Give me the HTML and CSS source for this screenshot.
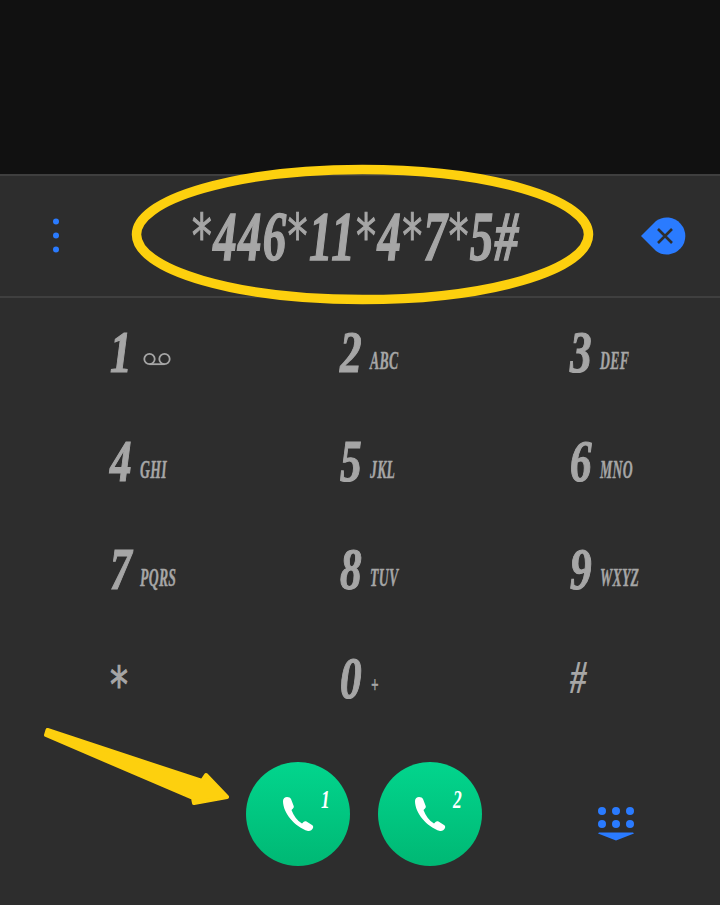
FILE: index.html
```html
<!DOCTYPE html>
<html lang="en">
<head>
    <meta charset="UTF-8">
    <title>Dialer</title>
    <link rel="stylesheet" href="styles.css">
</head>
<body>
    <div class="status-area"></div>

    <div class="number-bar">
        <svg class="menu-icon" width="8" height="36" viewBox="0 0 8 36">
            <circle cx="4" cy="3.500" r="3"/>
            <circle cx="4" cy="17.500" r="3"/>
            <circle cx="4" cy="31.500" r="3"/>
        </svg>
        <div class="number"><span class="squeeze"><span class="ast">*</span>446<span class="ast">*</span>11<span class="ast">*</span>4<span class="ast">*</span>7<span class="ast">*</span>5#</span></div>
        <svg class="backspace" width="46" height="38" viewBox="0 0 46 38">
            <path d="M1 19 L16 4 A18.500 18.500 0 1 1 16 34 Z" fill="#2a7bff"/>
            <path d="M18 12 L32 26 M32 12 L18 26" stroke="#2d2d2d" stroke-width="2.600" fill="none"/>
        </svg>
    </div>

    <div class="keypad">
        <div class="key"><span class="digit">1</span>
            <svg class="voicemail" width="28" height="14" viewBox="0 0 28 14">
                <circle cx="6.500" cy="7" r="5.200"/>
                <circle cx="21.500" cy="7" r="5.200"/>
                <path d="M6.500 12.200 H21.500"/>
            </svg>
        </div>
        <div class="key"><span class="digit">2</span><span class="letters">ABC</span></div>
        <div class="key"><span class="digit">3</span><span class="letters">DEF</span></div>
        <div class="key"><span class="digit">4</span><span class="letters">GHI</span></div>
        <div class="key"><span class="digit">5</span><span class="letters">JKL</span></div>
        <div class="key"><span class="digit">6</span><span class="letters">MNO</span></div>
        <div class="key"><span class="digit">7</span><span class="letters">PQRS</span></div>
        <div class="key"><span class="digit">8</span><span class="letters">TUV</span></div>
        <div class="key"><span class="digit">9</span><span class="letters">WXYZ</span></div>
        <div class="key"><span class="digit star">*</span></div>
        <div class="key"><span class="digit">0</span><span class="letters plus">+</span></div>
        <div class="key"><span class="digit hash">#</span></div>
    </div>

    <div class="call-row">
        <div class="call-btn">
            <svg width="34" height="38" viewBox="0 0 34 38"><path class="handset" d="M6 2 C4 2 2 3.500 2 6 C2 18 14 32 27 36 C29 36.500 31 35 32 33 C32.500 31.500 32 30.500 31 30 L25.500 26.500 C24.500 26 23.500 26 22.500 27 L21 28.500 C16 25.500 12.500 20.500 10.500 15 L12 13.500 C13 12.500 13 11.500 12.500 10.500 L10 4 C9.500 2.700 8 2 6 2 Z"/></svg>
            <span class="sim">1</span>
        </div>
        <div class="call-btn">
            <svg width="34" height="38" viewBox="0 0 34 38"><path class="handset" d="M6 2 C4 2 2 3.500 2 6 C2 18 14 32 27 36 C29 36.500 31 35 32 33 C32.500 31.500 32 30.500 31 30 L25.500 26.500 C24.500 26 23.500 26 22.500 27 L21 28.500 C16 25.500 12.500 20.500 10.500 15 L12 13.500 C13 12.500 13 11.500 12.500 10.500 L10 4 C9.500 2.700 8 2 6 2 Z"/></svg>
            <span class="sim">2</span>
        </div>
        <svg class="hide-keypad" width="38" height="36" viewBox="0 0 38 36">
            <circle cx="5" cy="5" r="4"/><circle cx="19" cy="5" r="4"/><circle cx="33" cy="5" r="4"/>
            <circle cx="5" cy="18" r="4"/><circle cx="19" cy="18" r="4"/><circle cx="33" cy="18" r="4"/>
            <path d="M2 26.500 H36 L37 27.500 L19 34.500 L1 27.500 Z"/>
        </svg>
    </div>

    <!-- yellow annotations drawn on top of the screenshot -->
    <svg class="annotations" width="720" height="905" viewBox="0 0 720 905">
        <ellipse cx="362.500" cy="234.500" rx="226" ry="65" fill="none" stroke="#fdd00e" stroke-width="9.500"/>
        <path d="M47.500 730 L202 781 L206 775 L227 797 L194 803 L193 798 L46 735 Z" fill="#fdd00e" stroke="#fdd00e" stroke-width="4" stroke-linejoin="round"/>
    </svg>
</body>
</html>
```
FILE: styles.css
```css
* {
    margin: 0;
    padding: 0;
    box-sizing: border-box;
}

body {
    position: relative;
    width: 720px;
    height: 905px;
    overflow: hidden;
    background-color: #2d2d2d;
    font-family: "Liberation Serif", serif;
    font-weight: bold;
    font-style: italic;
    color: #a6a6a6;
}

.status-area {
    height: 174px;
    background-color: #111111;
}

.number-bar {
    display: flex;
    align-items: center;
    height: 124px;
    padding: 0 34px 0 52px;
    border-top: 2px solid #3f3f3f;
    border-bottom: 2px solid #3f3f3f;
}

.menu-icon {
    fill: #2a7bff;
    flex: none;
}

.number {
    flex: 1;
    min-width: 0;
    display: flex;
    justify-content: center;
    font-size: 70px;
    line-height: 80px;
    letter-spacing: 2px;
    white-space: nowrap;
    margin-left: 12px;
    -webkit-text-stroke: 1.500px #a6a6a6;
}

.squeeze {
    display: inline-block;
    transform: scaleX(0.67);
}

/* the dialer font has big star-shaped asterisks */
.ast {
    font-family: "DejaVu Sans", sans-serif;
    font-size: 60px;
    font-weight: normal;
    vertical-align: 3px;
    -webkit-text-stroke: 1px #a6a6a6;
}

.backspace {
    flex: none;
}

.keypad {
    display: grid;
    grid-template-columns: 230px 230px 150px;
    grid-auto-rows: 108.500px;
    padding: 0 0 0 110px;
}

.key {
    display: flex;
    align-items: center;
    height: 108px;
}

.digit {
    display: inline-block;
    width: 30px;
    font-size: 60px;
    line-height: 1;
    transform: scaleX(0.72);
    transform-origin: left center;
    -webkit-text-stroke: 1.200px #a6a6a6;
}

.letters {
    display: inline-block;
    font-size: 25px;
    line-height: 1;
    margin-top: 17px;
    letter-spacing: 0.500px;
    transform: scaleX(0.55);
    transform-origin: left center;
    -webkit-text-stroke: 0.400px #a6a6a6;
}

.plus {
    font-size: 24px;
    margin-left: 1px;
    margin-top: 12px;
}

.star {
    font-family: "DejaVu Sans", sans-serif;
    font-weight: normal;
    font-size: 50px;
    margin-top: 14px;
    -webkit-text-stroke: 1px #a6a6a6;
}

.hash {
    font-size: 46px;
    margin-top: 0;
    -webkit-text-stroke: 0;
}

.voicemail {
    margin-left: 3px;
    margin-top: 14px;
    fill: none;
    stroke: #a6a6a6;
    stroke-width: 1.800;
}

.call-row {
    display: flex;
    align-items: center;
    gap: 28px;
    padding: 30px 0 0 246px;
}

.call-btn {
    position: relative;
    display: flex;
    align-items: center;
    justify-content: center;
    width: 104px;
    height: 104px;
    border-radius: 50%;
    background: linear-gradient(180deg, #02d58d, #00b874);
}

.handset {
    fill: #ffffff;
}

.sim {
    position: absolute;
    left: 75px;
    top: 25px;
    color: #ffffff;
    font-size: 25px;
    line-height: 1;
    transform: scaleX(0.7);
    transform-origin: left center;
}

.hide-keypad {
    fill: #2a7bff;
    margin-left: 87px;
    margin-top: 20px;
}

.annotations {
    position: absolute;
    left: 0;
    top: 0;
}
```
